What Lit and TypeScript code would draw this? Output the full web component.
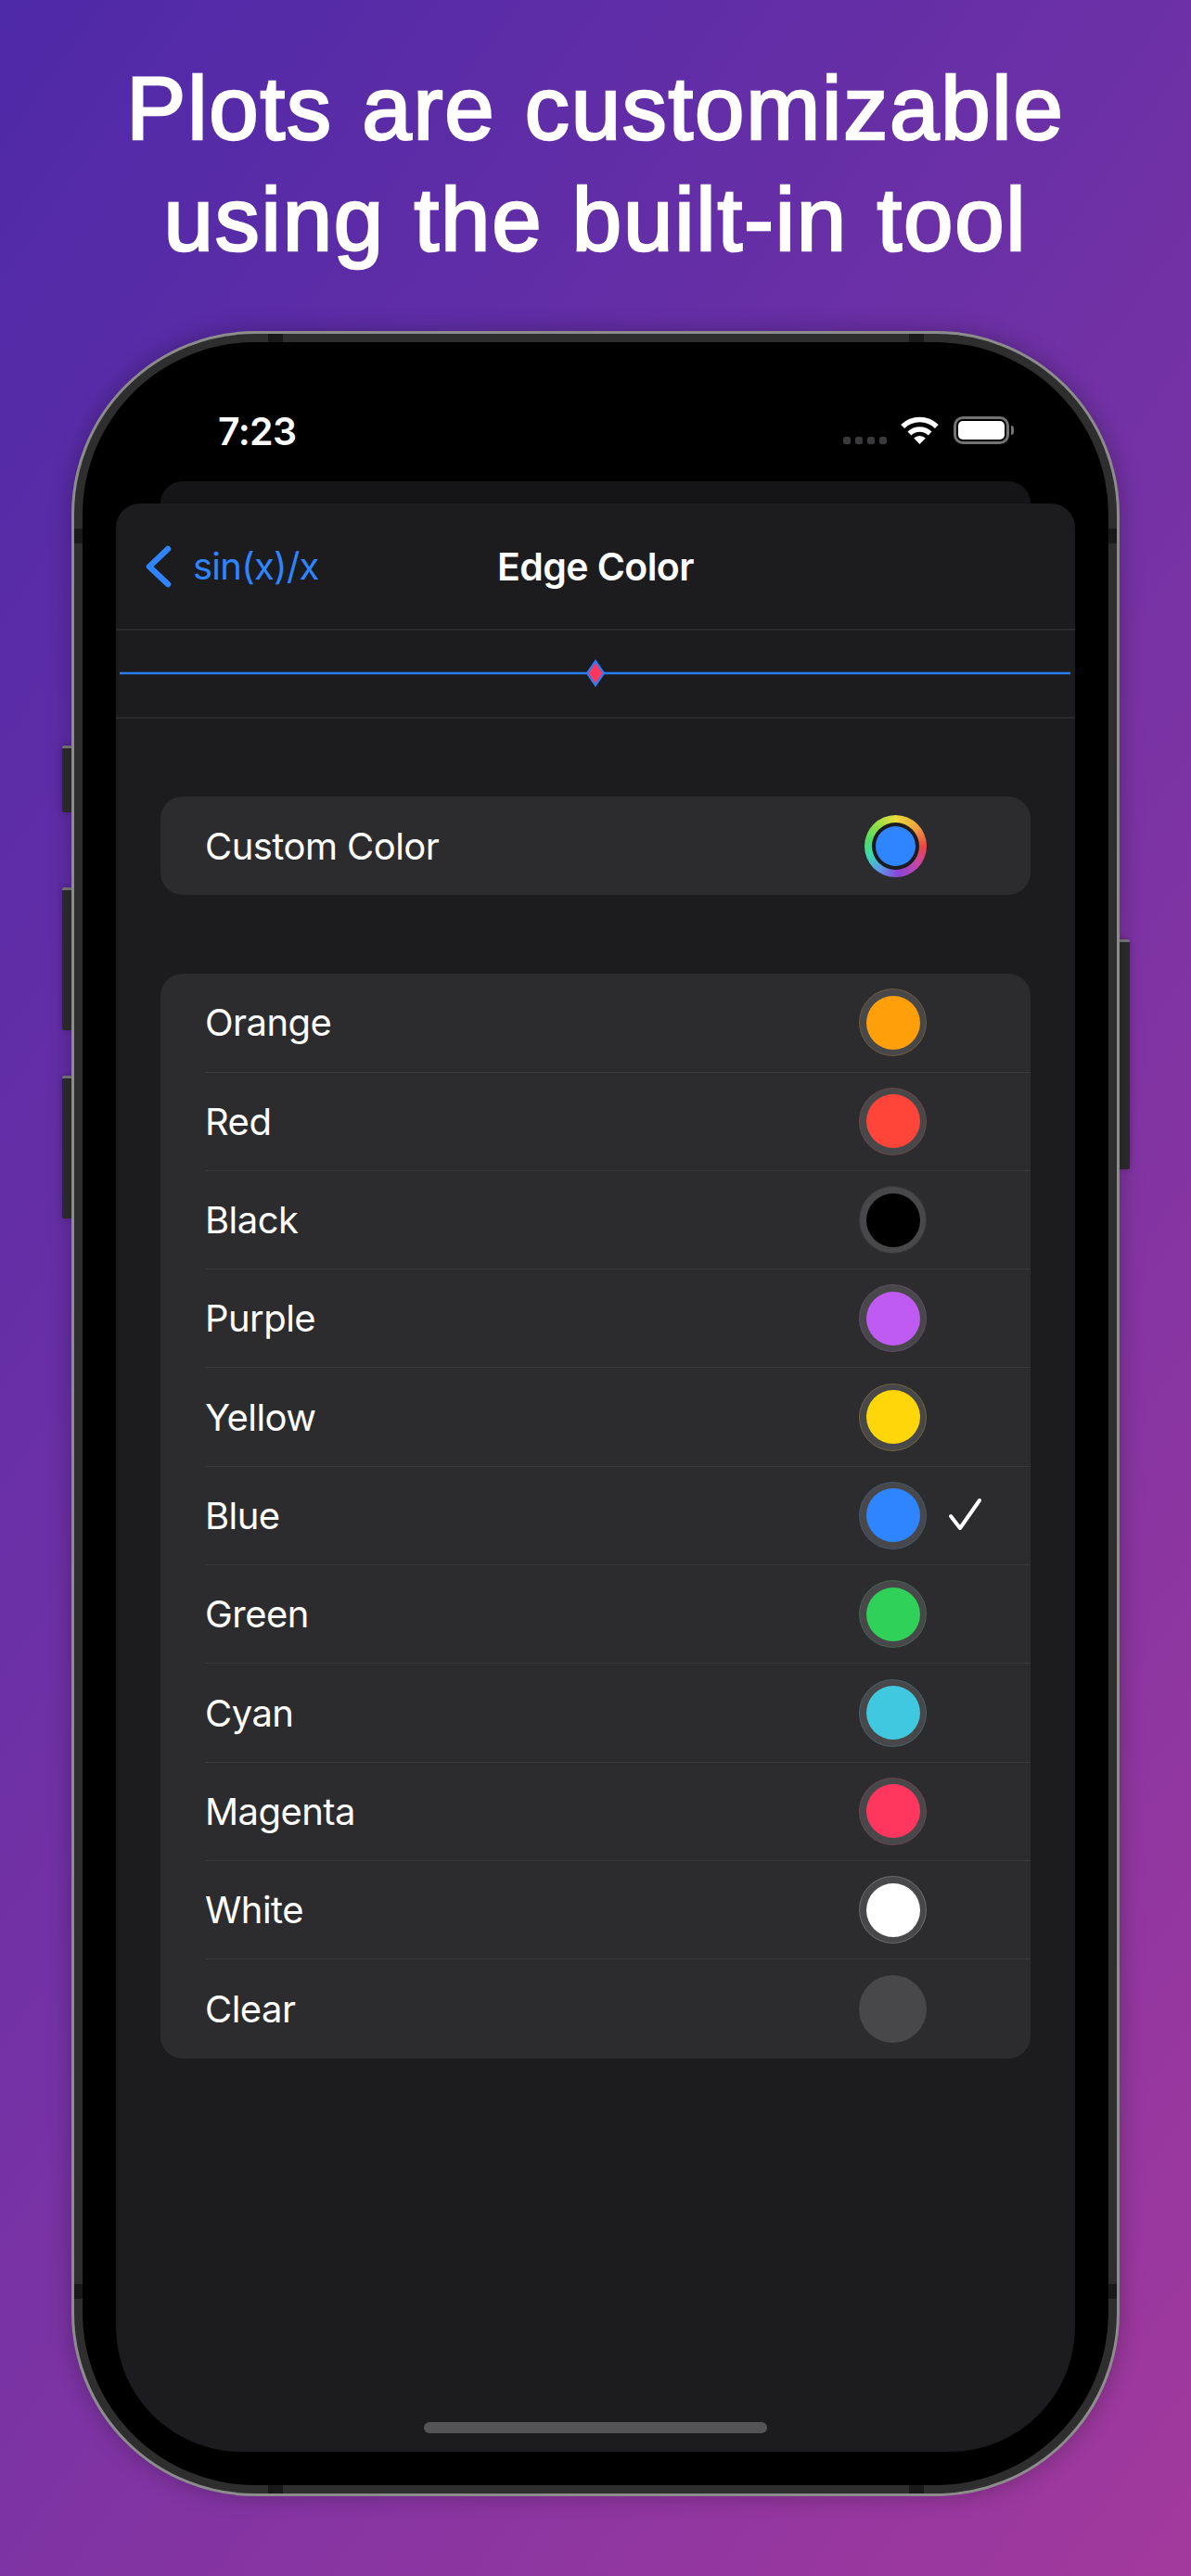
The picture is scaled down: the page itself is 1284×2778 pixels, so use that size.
import { LitElement, html, css, svg } from "lit";
import { customElement } from "lit/decorators.js";

const COLORS: { name: string; color: string }[] = [
  { name: "Orange", color: "#ff9f0a" },
  { name: "Red", color: "#ff453a" },
  { name: "Black", color: "#000000" },
  { name: "Purple", color: "#bf5af2" },
  { name: "Yellow", color: "#ffd60a" },
  { name: "Blue", color: "#2f85ff" },
  { name: "Green", color: "#30d158" },
  { name: "Cyan", color: "#40c8e0" },
  { name: "Magenta", color: "#ff375f" },
  { name: "White", color: "#ffffff" },
  { name: "Clear", color: "transparent" },
];

@customElement("app-root")
export class AppRoot extends LitElement {
  static styles = css`
    :host {
      display: block;
      width: 1284px;
      height: 2778px;
      overflow: hidden;
      background: linear-gradient(125deg, #4e29a8 0%, #7532a5 50%, #a2399d 100%);
      font-family: Inter, "Liberation Sans", sans-serif;
      color: #fff;
    }
    .headline {
      margin: 0;
      padding-top: 57px;
      height: 357px;
      box-sizing: border-box;
      text-align: center;
      font-family: "Liberation Sans", Arial, sans-serif;
      font-size: 96px;
      line-height: 120px;
      font-weight: 400;
      letter-spacing: 1.8px;
      word-spacing: 3px;
      -webkit-text-stroke: 2.6px #fff;
      color: #fff;
    }
    .frame {
      position: relative;
      width: 1130px;
      height: 2335px;
      margin-left: 77px;
    }
    .btn {
      position: absolute;
      background: #2d2d2d;
      border-top: 3px solid #7a7a7a;
      box-sizing: border-box;
      box-shadow: 0 0 6px rgba(0, 0, 0, 0.25);
    }
    .btn.l {
      left: -10px;
      width: 11px;
      border-radius: 2px 0 0 2px;
    }
    .btn.r {
      right: -11px;
      width: 12px;
      border-radius: 0 2px 2px 0;
    }
    .shell {
      position: relative;
      width: 100%;
      height: 100%;
      box-sizing: border-box;
      border: 3px solid #8c8c8c;
      background: #2e2e2e;
      padding: 9px;
      border-radius: 198px;
      box-shadow: 0 0 24px rgba(0, 0, 0, 0.28);
    }
    .mark {
      position: absolute;
      background: #191919;
    }
    .mark.h {
      width: 16px;
      height: 9px;
    }
    .mark.v {
      width: 9px;
      height: 16px;
    }
    .black {
      height: 100%;
      box-sizing: border-box;
      background: #000;
      border-radius: 186px;
      padding: 0 36px 36px;
      display: flex;
      flex-direction: column;
      position: relative;
    }
    .status {
      height: 150px;
      flex: none;
      box-sizing: border-box;
      display: flex;
      justify-content: space-between;
      align-items: flex-start;
      padding: 0 66px 0 110px;
    }
    .time {
      margin-top: 76px;
      font-size: 41px;
      line-height: 40px;
      font-weight: 600;
      letter-spacing: -0.6px;
    }
    .sys {
      margin-top: 80px;
      display: flex;
      align-items: flex-end;
      height: 30px;
    }
    .dots {
      display: flex;
      gap: 5px;
      margin-right: 15px;
    }
    .dots i {
      width: 8px;
      height: 8px;
      border-radius: 2.5px;
      background: #3a3a3c;
      display: block;
    }
    .wifi {
      display: block;
      width: 41px;
      height: 30px;
      margin-right: 16px;
    }
    .batt {
      width: 60px;
      height: 30px;
      box-sizing: border-box;
      border: 3px solid #737373;
      border-radius: 10px;
      padding: 2px;
      background: #000;
    }
    .batt b {
      display: block;
      width: 100%;
      height: 100%;
      background: #fff;
      border-radius: 5px;
    }
    .nub {
      width: 3px;
      height: 10px;
      margin: 0 0 10px 2px;
      background: #737373;
      border-radius: 0 3px 3px 0;
    }
    .backcard {
      height: 24px;
      flex: none;
      margin: 0 48px;
      background: #151517;
      border-radius: 24px 24px 0 0;
    }
    .sheet {
      flex: 1;
      position: relative;
      background: #1c1c1e;
      border-radius: 26px 26px 135px 135px;
      overflow: hidden;
    }
    .nav {
      height: 137px;
      box-sizing: border-box;
      border-bottom: 2px solid #2a2a2c;
      display: grid;
      grid-template-columns: 1fr auto 1fr;
      align-items: center;
    }
    .back {
      display: flex;
      align-items: center;
      gap: 23px;
      padding-left: 30px;
      color: #2f85ff;
      font-size: 40px;
      font-weight: 400;
      letter-spacing: -0.75px;
    }
    .back svg {
      display: block;
      width: 30px;
      height: 50px;
    }
    .title {
      font-size: 41px;
      font-weight: 600;
      letter-spacing: -0.6px;
    }
    .preview {
      height: 95px;
      box-sizing: border-box;
      border-bottom: 2px solid #2a2a2c;
    }
    .preview svg {
      display: block;
      width: 1034px;
      height: 93px;
    }
    .content {
      padding: 84px 48px 0;
      display: flex;
      flex-direction: column;
      gap: 85px;
    }
    .card {
      background: #2c2c2e;
      border-radius: 24px;
      padding-left: 48px;
      overflow: hidden;
    }
    .row {
      height: 106.3px;
      box-sizing: border-box;
      display: flex;
      align-items: center;
      font-size: 40px;
      letter-spacing: -0.55px;
      font-weight: 400;
    }
    .row:not(:last-child) {
      border-bottom: 1.5px solid #3a3a3c;
    }
    .label {
      flex: 1;
    }
    .swatch {
      width: 73px;
      height: 73px;
      box-sizing: border-box;
      border-radius: 50%;
      background: #48484a;
      display: flex;
      align-items: center;
      justify-content: center;
      position: relative;
    }
    .swatch::after {
      content: "";
      position: absolute;
      inset: 0;
      border-radius: 50%;
      border: 1px solid var(--c);
      opacity: 0.2;
    }
    .swatch i {
      display: block;
      width: 58px;
      height: 58px;
      border-radius: 50%;
      background: var(--c);
    }
    .slot {
      width: 112px;
      flex: none;
      display: flex;
    }
    .slot svg {
      display: block;
      width: 38px;
      height: 38px;
      margin-left: 23px;
    }
    .wheel {
      width: 67px;
      height: 67px;
      border-radius: 50%;
      background: conic-gradient(#ecdc3c 0deg, #eda040 50deg, #ee4545 90deg, #c545a8 130deg, #8a45d8 175deg, #5a9ae8 215deg, #3cd8b0 250deg, #55dc60 285deg, #a8e040 330deg, #ecdc3c 360deg);
      display: flex;
      align-items: center;
      justify-content: center;
    }
    .wheel span {
      width: 51px;
      height: 51px;
      border-radius: 50%;
      background: #1c1c1e;
      display: flex;
      align-items: center;
      justify-content: center;
    }
    .wheel i {
      display: block;
      width: 43px;
      height: 43px;
      border-radius: 50%;
      background: #2f85ff;
    }
    .home {
      position: absolute;
      left: 332px;
      bottom: 20px;
      width: 370px;
      height: 12px;
      border-radius: 6px;
      background: #545456;
    }
  `;

  private wifi() {
    return html`<svg class="wifi" viewBox="0 0 41 30">
      <path d="M2.1 10.9A26.5 26.5 0 0 1 38.9 10.9" fill="none" stroke="#fff" stroke-width="5.6"></path>
      <path d="M9.4 18.5A16 16 0 0 1 31.6 18.5" fill="none" stroke="#fff" stroke-width="5.6"></path>
      <path d="M20.5 30L14.2 23.5A9 9 0 0 1 26.8 23.5Z" fill="#fff"></path>
    </svg>`;
  }

  private preview() {
    return html`<svg viewBox="0 0 1034 93">
      ${svg`<line x1="4" y1="46" x2="1029" y2="46" stroke="#2a7df5" stroke-width="2.4"></line>
      <path d="M517 33L526 46L517 59L508 46Z" fill="#ff375f" stroke="#2a7df5" stroke-width="2.2"></path>`}
    </svg>`;
  }

  render() {
    return html`
      <h1 class="headline">Plots are customizable<br />using the built-in tool</h1>
      <div class="frame">
        <div class="btn l" style="top:447px;height:72px"></div>
        <div class="btn l" style="top:600px;height:154px"></div>
        <div class="btn l" style="top:803px;height:154px"></div>
        <div class="btn r" style="top:656px;height:248px"></div>
        <div class="shell">
          <div class="mark h" style="left:209px;top:0"></div>
          <div class="mark h" style="left:900px;top:0"></div>
          <div class="mark h" style="left:209px;bottom:0"></div>
          <div class="mark h" style="left:900px;bottom:0"></div>
          <div class="mark v" style="left:0;top:210px"></div>
          <div class="mark v" style="right:0;top:210px"></div>
          <div class="mark v" style="left:0;top:2103px"></div>
          <div class="mark v" style="right:0;top:2103px"></div>
          <div class="black">
            <div class="status">
              <div class="time">7:23</div>
              <div class="sys">
                <div class="dots"><i></i><i></i><i></i><i></i></div>
                ${this.wifi()}
                <div class="batt"><b></b></div>
                <div class="nub"></div>
              </div>
            </div>
            <div class="backcard"></div>
            <div class="sheet">
              <div class="nav">
                <div class="back">
                  <svg viewBox="0 0 30 50">
                    <path d="M26 6L6 25L26 44" fill="none" stroke="#2f85ff" stroke-width="6.5" stroke-linecap="round" stroke-linejoin="round"></path>
                  </svg>
                  <span>sin(x)/x</span>
                </div>
                <div class="title">Edge Color</div>
                <div></div>
              </div>
              <div class="preview">${this.preview()}</div>
              <div class="content">
                <div class="card">
                  <div class="row">
                    <span class="label">Custom Color</span>
                    <div class="wheel"><span><i></i></span></div>
                    <div class="slot"></div>
                  </div>
                </div>
                <div class="card">
                  ${COLORS.map(
                    (c) => html`<div class="row">
                      <span class="label">${c.name}</span>
                      <div class="swatch" style="--c:${c.color}"><i></i></div>
                      <div class="slot">
                        ${c.name === "Blue"
                          ? html`<svg viewBox="0 0 38 38">
                              <path d="M3 20L13 33L34 3" fill="none" stroke="#fff" stroke-width="4" stroke-linecap="round" stroke-linejoin="round"></path>
                            </svg>`
                          : ""}
                      </div>
                    </div>`
                  )}
                </div>
              </div>
              <div class="home"></div>
            </div>
          </div>
        </div>
      </div>
    `;
  }
}
